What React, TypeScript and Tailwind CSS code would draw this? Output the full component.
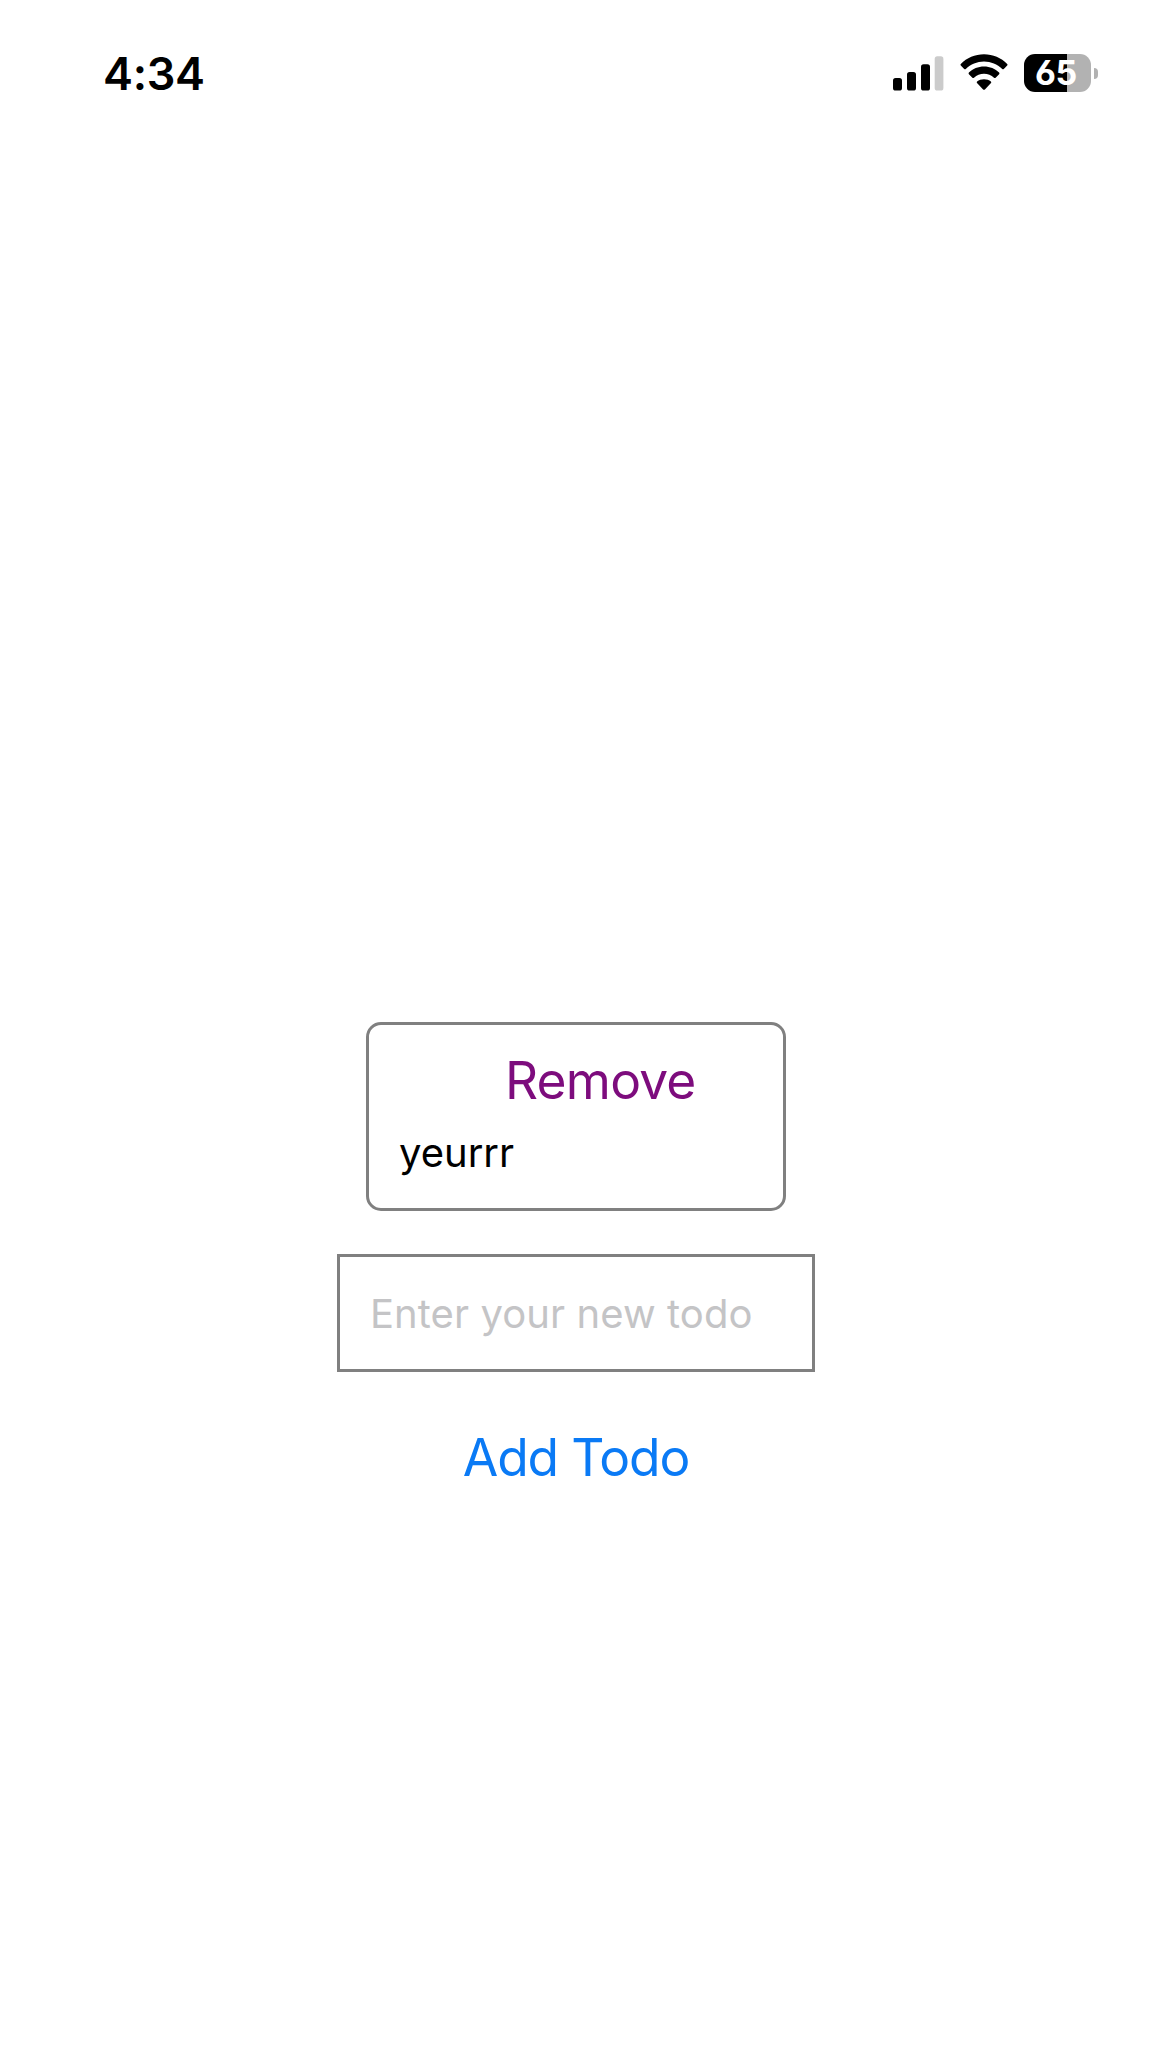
function SignalIcon() {
  return (
    <svg width="51" height="35" viewBox="0 0 51 35" aria-hidden="true">
      <rect x="0" y="22" width="9" height="12.5" rx="2.6" fill="#000" />
      <rect x="14" y="16" width="9" height="18.5" rx="2.6" fill="#000" />
      <rect x="28" y="8.2" width="9" height="26.3" rx="2.6" fill="#000" />
      <rect x="41.7" y="0.3" width="8.7" height="34.2" rx="2.6" fill="#cbcbcb" />
    </svg>
  );
}

function WifiIcon() {
  return (
    <svg width="48" height="38" viewBox="0 0 48 38" aria-hidden="true">
      <path d="M24 0.300C33 0.300 41.200 4 47.200 9.900C47.700 10.400 47.700 11 47.200 11.500L43.800 14.900C43.300 15.400 42.700 15.400 42.200 14.900C37.300 10.300 31 7.500 24 7.500S10.700 10.300 5.800 14.900C5.300 15.400 4.700 15.400 4.200 14.900L0.800 11.500C0.300 11 0.300 10.400 0.800 9.900C6.800 4 15 0.300 24 0.300Z" />
      <path d="M24 12.600C29.900 12.600 35.200 14.900 39.100 18.600C39.600 19.100 39.600 19.700 39.100 20.200L35.600 23.700C35.100 24.200 34.500 24.200 34 23.700C31.300 21.200 27.800 19.700 24 19.700S16.700 21.200 14 23.700C13.500 24.200 12.900 24.200 12.400 23.700L8.900 20.200C8.400 19.700 8.400 19.100 8.900 18.600C12.800 14.900 18.100 12.600 24 12.600Z" />
      <path d="M24 25.200C26.700 25.200 29.100 26.100 30.900 27.500C31.400 28 31.400 28.500 31 29L24.900 35.400C24.300 36 23.700 36 23.100 35.400L17 29C16.600 28.500 16.600 28 17.100 27.500C18.900 26.100 21.300 25.200 24 25.200Z" />
    </svg>
  );
}

function Battery() {
  return (
    <div className="flex items-center gap-[3px]">
      <div className="flex h-[38px] w-[67px] items-center justify-center rounded-[11px] bg-[linear-gradient(to_right,#000_43px,#b2b2b2_43px)] pr-[3px] text-[34px] leading-none font-bold tracking-[-0.3px] text-white [font-feature-settings:'cv03']">
        <span>65</span>
      </div>
      <div className="h-[11px] w-[4px] rounded-r-full bg-[#b2b2b2]" />
    </div>
  );
}

export default function App() {
  return (
    <div className="flex h-[2048px] w-[1152px] flex-col items-center bg-white font-['Inter',sans-serif] text-black">
      <header className="flex h-[146px] w-full items-center justify-between pr-[54px] pl-[103px]">
        <time className="text-[45px] leading-none font-semibold tracking-[-0.3px]">4:34</time>
        <div className="flex items-center">
          <SignalIcon />
          <div className="ml-4">
            <WifiIcon />
          </div>
          <div className="ml-4">
            <Battery />
          </div>
        </div>
      </header>

      <main className="mt-[876px] flex flex-col items-center">
        <section className="flex h-[189px] w-[420px] flex-col rounded-[15px] border-3 border-[#808080] pt-[22px] pl-[30px]">
          <button className="ml-[106px] self-start text-[51.500px] leading-[66px] tracking-[-0.8px] text-[#7d0c7d]">
            Remove
          </button>
          <p className="mt-[12px] text-[40px] leading-[56px]">yeurrr</p>
        </section>
        <input
          className="mt-[43px] h-[118px] w-[478px] border-3 border-[#808080] bg-white pl-[30px] text-[40px] tracking-[0.08px] outline-none placeholder:text-[#c4c4c6]"
          placeholder="Enter your new todo"
        />
        <button className="mt-[52px] text-[51.500px] leading-[66px] tracking-[-1.150px] text-[#0a7af5]">Add Todo</button>
      </main>
    </div>
  );
}
